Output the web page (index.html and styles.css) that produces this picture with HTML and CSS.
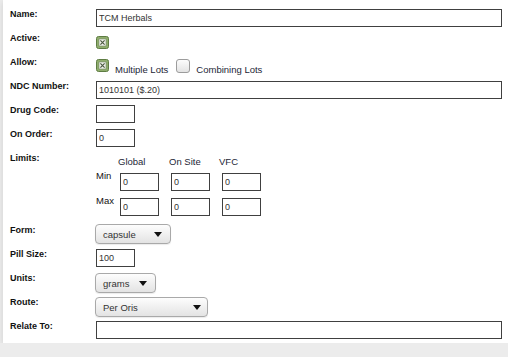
FILE: index.html
```html
<!DOCTYPE html>
<html lang="en">
<head>
    <meta charset="UTF-8">
    <title>Drug Details</title>
    <link rel="stylesheet" href="styles.css">
</head>
<body>
    <div class="panel">
        <div class="row">
            <div class="label">Name:</div>
            <div><input class="text wide" type="text" value="TCM Herbals"></div>
        </div>
        <div class="row">
            <div class="label">Active:</div>
            <div class="checks">
                <svg class="box" width="13" height="13" viewBox="0 0 13 13">
                    <rect x=".5" y=".5" width="12" height="12" rx="2" fill="#8fad6c" stroke="#5e7c43"/>
                    <rect x="3" y="3" width="7" height="7" fill="#f3f6ee" stroke="#76866a" stroke-width=".6"/>
                    <path d="M4.4 4.4l4.2 4.2M8.6 4.4l-4.2 4.2" stroke="#4c5941" stroke-width="1.2"/>
                </svg>
            </div>
        </div>
        <div class="row">
            <div class="label">Allow:</div>
            <div class="checks">
                <svg class="box" width="13" height="13" viewBox="0 0 13 13">
                    <rect x=".5" y=".5" width="12" height="12" rx="2" fill="#8fad6c" stroke="#5e7c43"/>
                    <rect x="3" y="3" width="7" height="7" fill="#f3f6ee" stroke="#76866a" stroke-width=".6"/>
                    <path d="M4.4 4.4l4.2 4.2M8.6 4.4l-4.2 4.2" stroke="#4c5941" stroke-width="1.2"/>
                </svg>
                <span class="check-text">Multiple Lots</span>
                <svg class="box off" width="14" height="14" viewBox="0 0 14 14">
                    <defs>
                        <linearGradient id="boxfill" x1="0" y1="0" x2="0" y2="1">
                            <stop offset="0" stop-color="#fdfdfd"/>
                            <stop offset="1" stop-color="#e2e2e2"/>
                        </linearGradient>
                    </defs>
                    <rect x=".5" y=".5" width="13" height="13" rx="2.5" fill="url(#boxfill)" stroke="#9c9c9c"/>
                </svg>
                <span class="check-text">Combining Lots</span>
            </div>
        </div>
        <div class="row">
            <div class="label">NDC Number:</div>
            <div><input class="text wide" type="text" value="1010101 ($.20)"></div>
        </div>
        <div class="row">
            <div class="label">Drug Code:</div>
            <div><input class="text short" type="text" value=""></div>
        </div>
        <div class="row">
            <div class="label">On Order:</div>
            <div><input class="text short" type="text" value="0"></div>
        </div>
        <div class="row limits">
            <div class="label">Limits:</div>
            <div class="limits-grid">
                <span></span>
                <span class="head">Global</span>
                <span class="head">On Site</span>
                <span class="head vfc">VFC</span>

                <span class="side">Min</span>
                <input class="text cell" type="text" value="0">
                <input class="text cell" type="text" value="0">
                <input class="text cell" type="text" value="0">

                <span class="side">Max</span>
                <input class="text cell" type="text" value="0">
                <input class="text cell" type="text" value="0">
                <input class="text cell" type="text" value="0">
            </div>
        </div>
        <div class="row">
            <div class="label">Form:</div>
            <div><div class="select form-select"><span>capsule</span><span class="caret"></span></div></div>
        </div>
        <div class="row">
            <div class="label">Pill Size:</div>
            <div><input class="text short" type="text" value="100"></div>
        </div>
        <div class="row">
            <div class="label">Units:</div>
            <div><div class="select units-select"><span>grams</span><span class="caret"></span></div></div>
        </div>
        <div class="row">
            <div class="label">Route:</div>
            <div><div class="select route-select"><span>Per Oris</span><span class="caret"></span></div></div>
        </div>
        <div class="row">
            <div class="label">Relate To:</div>
            <div><input class="text wide" type="text" value=""></div>
        </div>
    </div>
</body>
</html>
```

FILE: styles.css
```css
body {
    margin: 0;
    background-color: #ececec;
    font-family: 'Liberation Sans', Arial, sans-serif;
    font-size: 9.5px;
    color: #222;
}

.panel {
    box-sizing: border-box;
    height: 343px;
    margin-left: 3px;
    padding: 6px 6px 0 7px;
    background: #fff;
    box-shadow: 0 2px 6px rgba(0, 0, 0, 0.12);
}

.row {
    display: grid;
    grid-template-columns: 86px 1fr;
    height: 24px;
}

.row.limits {
    height: 72px;
}

.label {
    padding-top: 2px;
    font-size: 9px;
    font-weight: bold;
    line-height: 12px;
    color: #111;
}

.text {
    display: block;
    box-sizing: border-box;
    height: 18px;
    margin: 3px 0 0;
    padding: 0 2px;
    border: 1px solid #404040;
    border-radius: 0;
    background: #fff;
    font: 9px 'Liberation Sans', Arial, sans-serif;
    color: #333;
    outline: none;
}

.text.wide {
    width: 100%;
}

.text.short {
    width: 39px;
}

/* checkboxes */
.checks {
    display: flex;
    align-items: flex-start;
}

.box {
    display: block;
    margin-top: 5px;
    flex: none;
}

.row:nth-child(2) .box {
    margin-top: 6px;
}

.check-text {
    margin: 10px 8px 0 6px;
    line-height: 12px;
    color: #1d2636;
}

/* limits table */
.limits-grid {
    display: grid;
    grid-template-columns: 24px 51px 51px 39px;
    grid-template-rows: 17px 25px 18px;
    margin-top: 6px;
}

.head {
    margin-left: -2px;
    line-height: 12px;
    color: #1d2636;
}

.head.vfc {
    margin-left: -3px;
}

.side {
    margin-top: -3px;
    line-height: 12px;
    color: #111;
}

.text.cell {
    width: 39px;
    margin: 0;
}

/* drop downs */
.select {
    display: flex;
    align-items: center;
    justify-content: space-between;
    box-sizing: border-box;
    height: 20px;
    margin: 3px 0 0 -1px;
    padding: 0 8px 0 7px;
    border: 1px solid #a9a9a9;
    border-radius: 4px;
    background: linear-gradient(#fdfdfd, #e3e3e3);
    box-shadow: 0 1px 1px rgba(0, 0, 0, 0.08);
    color: #333;
}

.form-select {
    width: 76px;
    margin-top: 2px;
}

.units-select {
    width: 61px;
}

.route-select {
    width: 113px;
    padding-right: 6px;
}

.caret {
    width: 0;
    height: 0;
    border-left: 4px solid transparent;
    border-right: 4px solid transparent;
    border-top: 5px solid #111;
}
```
